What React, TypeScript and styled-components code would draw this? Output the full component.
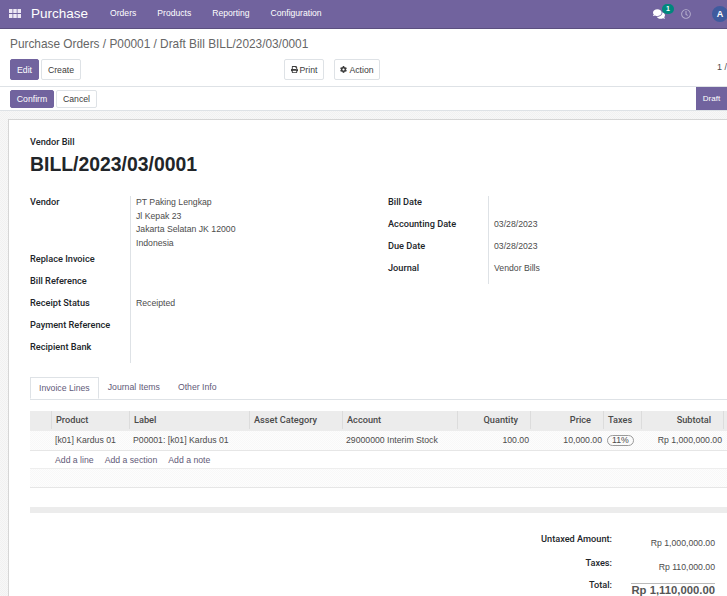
import React from 'react';
import styled, { createGlobalStyle } from 'styled-components';
import { FaCog, FaComments, FaPrint, FaRegClock } from 'react-icons/fa';

const GlobalStyle = createGlobalStyle`
  html, body {
    margin: 0;
    padding: 0;
    background: #fff;
  }
  body {
    font-family: "Liberation Sans", Arial, sans-serif;
    font-size: 8.7px;
    color: #4c4c4c;
  }
`;

const strongFont = `
  font-family: "Roboto", "Liberation Sans", Arial, sans-serif;
  font-size: 9.2px;
  font-weight: 500;
`;

const dotted = `
  background-color: #f7f7f7;
  background-image: linear-gradient(45deg, #f1f1f1 25%, transparent 25%, transparent 75%, #f1f1f1 75%),
    linear-gradient(45deg, #f1f1f1 25%, transparent 25%, transparent 75%, #f1f1f1 75%);
  background-size: 2px 2px;
  background-position: 0 0, 1px 1px;
`;

const lightDotted = `
  background-color: #fdfdfd;
  background-image: linear-gradient(45deg, #f8f8f8 25%, transparent 25%, transparent 75%, #f8f8f8 75%),
    linear-gradient(45deg, #f8f8f8 25%, transparent 25%, transparent 75%, #f8f8f8 75%);
  background-size: 2px 2px;
  background-position: 0 0, 1px 1px;
`;

const Page = styled.div`
  width: 727px;
  height: 596px;
  overflow: hidden;
  display: flex;
  flex-direction: column;
`;

const Navbar = styled.header`
  height: 29px;
  flex: none;
  box-sizing: border-box;
  background: #71639e;
  border-bottom: 1px solid #5b4f7f;
  color: #fff;
  display: flex;
  align-items: center;
  padding-left: 9px;
`;

const AppsIcon = styled.svg`
  width: 12px;
  height: 9px;
  flex: none;
  margin-top: -2px;
`;

const AppName = styled.span`
  font-size: 13.5px;
  margin-left: 10px;
  margin-right: 22px;
  margin-top: -2px;
`;

const NavItem = styled.span`
  font-size: 8.6px;
  margin-right: 21px;
  margin-top: -2px;
`;

const NavRight = styled.div`
  margin-left: auto;
  display: flex;
  align-items: center;
`;

const Chat = styled.div`
  position: relative;
  display: flex;
  margin-right: 16px;
`;

const Badge = styled.span`
  position: absolute;
  top: -4px;
  left: 9px;
  width: 12px;
  height: 10px;
  border-radius: 5px;
  background: #00877d;
  font-size: 7px;
  font-weight: 700;
  line-height: 10px;
  text-align: center;
`;

const Avatar = styled.span`
  width: 16px;
  height: 16px;
  margin-left: 21px;
  margin-right: -1px;
  border-radius: 50%;
  background: #3f5b9e;
  font-size: 9px;
  font-weight: 700;
  line-height: 16px;
  text-align: center;
`;

const ControlPanel = styled.div`
  flex: none;
  height: 58px;
  box-sizing: border-box;
  padding: 8px 10px 0;
  border-bottom: 1px solid #dee2e6;
`;

const Breadcrumb = styled.div`
  font-size: 11.85px;
  line-height: 14px;
  color: #666;
  margin-bottom: 8px;
`;

const ButtonRow = styled.div`
  display: flex;
  align-items: flex-start;
`;

const Button = styled.button<{ $primary?: boolean; $space?: number; $width: number; $height?: number }>`
  box-sizing: border-box;
  width: ${p => p.$width}px;
  height: ${p => p.$height ?? 21}px;
  padding: 0;
  margin-right: ${p => p.$space ?? 2}px;
  border: 1px solid ${p => (p.$primary ? '#71639e' : '#dee2e6')};
  border-radius: 2px;
  background: ${p => (p.$primary ? '#71639e' : '#fff')};
  color: ${p => (p.$primary ? '#fff' : '#3c3c3c')};
  font-family: inherit;
  font-size: 8.7px;
  display: inline-flex;
  align-items: center;
  justify-content: center;
  gap: 2px;
`;

const Pager = styled.span`
  margin-left: auto;
  margin-right: -10px;
  padding-top: 3px;
  width: 10px;
  overflow: hidden;
  font-size: 9px;
  white-space: nowrap;
`;

const StatusBar = styled.div`
  flex: none;
  height: 24px;
  box-sizing: border-box;
  padding-left: 10px;
  padding-top: 3px;
  display: flex;
  align-items: flex-start;
  border-bottom: 1px solid #dee2e6;
`;

const StatusStep = styled.span`
  margin-left: auto;
  margin-top: -3px;
  width: 31px;
  height: 23px;
  background: #71639e;
  color: #fff;
  font-size: 8px;
  line-height: 23px;
  text-align: center;
`;

const Content = styled.main`
  flex: 1;
  min-height: 0;
  padding: 8px 0 0 8px;
  ${dotted}
`;

const Sheet = styled.section`
  width: 760px;
  height: 500px;
  box-sizing: border-box;
  padding: 16px 0 0 21px;
  background: #fff;
  border: 1px solid #d5d5d5;
`;

const Kicker = styled.div`
  ${strongFont}
  line-height: 11px;
  color: #212529;
`;

const Title = styled.h1`
  margin: 6px 0 21px;
  font-size: 19.4px;
  line-height: 22px;
  font-weight: 700;
  color: #212529;
`;

const FormColumns = styled.div`
  display: flex;
  align-items: flex-start;
`;

const FieldGrid = styled.div<{ $width: number }>`
  width: ${p => p.$width}px;
  display: grid;
  grid-template-columns: 100px 1fr;
`;

const Label = styled.div<{ $height?: number }>`
  ${strongFont}
  height: ${p => p.$height ?? 22}px;
  line-height: 12px;
  color: #212529;
`;

const Value = styled.div<{ $height?: number }>`
  height: ${p => p.$height ?? 22}px;
  box-sizing: border-box;
  padding-left: 5px;
  line-height: 13.6px;
  border-left: 1px solid #dee2e6;
`;

const Tabs = styled.nav`
  margin-top: 14px;
  width: 700px;
  height: 22px;
  display: flex;
  border-bottom: 1px solid #dee2e6;
`;

const Tab = styled.span<{ $active?: boolean }>`
  box-sizing: border-box;
  height: 22px;
  padding: 0 9px;
  line-height: 20px;
  white-space: nowrap;
  color: #5f5a78;
  ${p =>
    p.$active &&
    `
    padding: 0 8px;
    background: #fff;
    border: 1px solid #dee2e6;
    border-bottom-color: #fff;
  `}
`;

const LinesTable = styled.div`
  margin-top: 11px;
  width: 700px;
`;

const columns = '22px 78px 120px 93px 115px 73px 73px 38px 82px';

const HeaderRow = styled.div`
  display: grid;
  grid-template-columns: ${columns};
  height: 20px;
  background: #ececec;
`;

const HeaderCell = styled.div<{ $right?: boolean }>`
  ${strongFont}
  box-sizing: border-box;
  padding: 0 4px;
  line-height: 18px;
  margin-bottom: 2px;
  color: #4a4a4a;
  text-align: ${p => (p.$right ? 'right' : 'left')};
  border-right: 1px solid #dcdcdc;
  padding-right: ${p => (p.$right ? '12px' : '4px')};
  white-space: nowrap;
`;

const DataRow = styled.div`
  display: grid;
  grid-template-columns: ${columns};
  height: 20px;
  border-bottom: 1px solid #e6e6e6;
  box-sizing: border-box;
  ${lightDotted}
`;

const DataCell = styled.div<{ $right?: boolean }>`
  padding: 0 2px 0 3px;
  line-height: 18px;
  text-align: ${p => (p.$right ? 'right' : 'left')};
  white-space: nowrap;
`;

const TaxTag = styled.span`
  display: inline-block;
  box-sizing: border-box;
  height: 11px;
  padding: 0 4px;
  border: 1px solid #999;
  border-radius: 6px;
  line-height: 9px;
`;

const AddRow = styled.div`
  display: flex;
  gap: 11px;
  height: 18px;
  padding-left: 25px;
  align-items: center;
  border-bottom: 1px solid #eee;
  box-sizing: border-box;
  color: #5f5a78;
`;

const EmptyRow = styled.div`
  height: 19px;
  box-sizing: border-box;
  border-bottom: 1px solid #e6e6e6;
  ${lightDotted}
`;

const Band = styled.div`
  margin-top: 19px;
  height: 6px;
  background: #ececec;
`;

const Totals = styled.div`
  width: 685px;
  margin-top: 20px;
  display: grid;
  grid-template-columns: 582px 103px;
`;

const TotalLabel = styled.div<{ $height: number }>`
  ${strongFont}
  height: ${p => p.$height}px;
  text-align: right;
  line-height: 12px;
  color: #212529;
`;

const TotalValue = styled.div<{ $height: number }>`
  height: ${p => p.$height}px;
  text-align: right;
  line-height: 12px;
  padding-top: 4px;
  box-sizing: border-box;
`;

const GrandTotal = styled.div`
  margin-left: 19px;
  margin-top: 4px;
  border-top: 1px solid #bbb;
  text-align: right;
  font-size: 11.3px;
  font-weight: 700;
  line-height: 13px;
  color: #555;
`;

const nav = ['Orders', 'Products', 'Reporting', 'Configuration'];

const App: React.FC = () => (
  <Page>
    <GlobalStyle />
    <Navbar>
      <AppsIcon viewBox="0 0 12 9" fill="#eee9f5">
        <rect x="0" y="0" width="3.5" height="4" />
        <rect x="4.25" y="0" width="3.5" height="4" />
        <rect x="8.5" y="0" width="3.5" height="4" />
        <rect x="0" y="5" width="3.5" height="4" />
        <rect x="4.25" y="5" width="3.5" height="4" />
        <rect x="8.5" y="5" width="3.5" height="4" />
      </AppsIcon>
      <AppName>Purchase</AppName>
      {nav.map(item => (
        <NavItem key={item}>{item}</NavItem>
      ))}
      <NavRight>
        <Chat>
          <FaComments size={12} />
          <Badge>1</Badge>
        </Chat>
        <FaRegClock size={10} color="#b3abcb" />
        <Avatar>A</Avatar>
      </NavRight>
    </Navbar>
    <ControlPanel>
      <Breadcrumb>Purchase Orders / P00001 / Draft Bill BILL/2023/03/0001</Breadcrumb>
      <ButtonRow>
        <Button $primary $width={29}>Edit</Button>
        <Button $width={40} $space={203}>Create</Button>
        <Button $width={40} $space={10}><FaPrint size={7} /> Print</Button>
        <Button $width={46}><FaCog size={7} /> Action</Button>
        <Pager>1 /</Pager>
      </ButtonRow>
    </ControlPanel>
    <StatusBar>
      <Button $primary $width={44} $height={18}>Confirm</Button>
      <Button $width={41} $height={18}>Cancel</Button>
      <StatusStep>Draft</StatusStep>
    </StatusBar>
    <Content>
      <Sheet>
        <Kicker>Vendor Bill</Kicker>
        <Title>BILL/2023/03/0001</Title>
        <FormColumns>
          <FieldGrid $width={358}>
            <Label $height={57}>Vendor</Label>
            <Value $height={57}>
              PT Paking Lengkap
              <br />
              Jl Kepak 23
              <br />
              Jakarta Selatan JK 12000
              <br />
              Indonesia
            </Value>
            <Label>Replace Invoice</Label>
            <Value />
            <Label>Bill Reference</Label>
            <Value />
            <Label>Receipt Status</Label>
            <Value>Receipted</Value>
            <Label>Payment Reference</Label>
            <Value />
            <Label>Recipient Bank</Label>
            <Value />
          </FieldGrid>
          <FieldGrid $width={300}>
            <Label>Bill Date</Label>
            <Value />
            <Label>Accounting Date</Label>
            <Value>03/28/2023</Value>
            <Label>Due Date</Label>
            <Value>03/28/2023</Value>
            <Label>Journal</Label>
            <Value>Vendor Bills</Value>
          </FieldGrid>
        </FormColumns>
        <Tabs>
          <Tab $active>Invoice Lines</Tab>
          <Tab>Journal Items</Tab>
          <Tab>Other Info</Tab>
        </Tabs>
        <LinesTable>
          <HeaderRow>
            <HeaderCell />
            <HeaderCell>Product</HeaderCell>
            <HeaderCell>Label</HeaderCell>
            <HeaderCell>Asset Category</HeaderCell>
            <HeaderCell>Account</HeaderCell>
            <HeaderCell $right>Quantity</HeaderCell>
            <HeaderCell $right>Price</HeaderCell>
            <HeaderCell>Taxes</HeaderCell>
            <HeaderCell $right>Subtotal</HeaderCell>
          </HeaderRow>
          <DataRow>
            <DataCell />
            <DataCell>[k01] Kardus 01</DataCell>
            <DataCell>P00001: [k01] Kardus 01</DataCell>
            <DataCell />
            <DataCell>29000000 Interim Stock</DataCell>
            <DataCell $right>100.00</DataCell>
            <DataCell $right>10,000.00</DataCell>
            <DataCell><TaxTag>11%</TaxTag></DataCell>
            <DataCell $right>Rp 1,000,000.00</DataCell>
          </DataRow>
          <AddRow>
            <span>Add a line</span>
            <span>Add a section</span>
            <span>Add a note</span>
          </AddRow>
          <EmptyRow />
          <Band />
        </LinesTable>
        <Totals>
          <TotalLabel $height={24}>Untaxed Amount:</TotalLabel>
          <TotalValue $height={24}>Rp 1,000,000.00</TotalValue>
          <TotalLabel $height={22}>Taxes:</TotalLabel>
          <TotalValue $height={22}>Rp 110,000.00</TotalValue>
          <TotalLabel $height={20}>Total:</TotalLabel>
          <GrandTotal>Rp 1,110,000.00</GrandTotal>
        </Totals>
      </Sheet>
    </Content>
  </Page>
);

export default App;
